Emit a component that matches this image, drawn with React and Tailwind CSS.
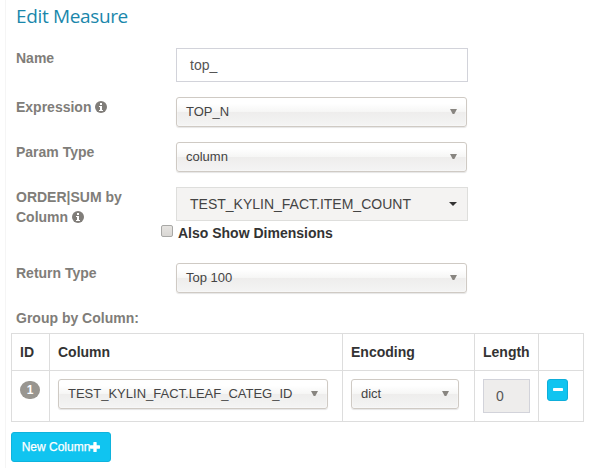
function Select({ children, className = "" }) {
  return (
    <div
      className={`flex h-[30px] items-center justify-between rounded-[3px] border border-[#cfcac4] bg-[linear-gradient(to_bottom,#fff_0%,#fff_20%,#f6f6f5_49%,#eeedec_51%,#f4f4f4_100%)] pr-[9px] pl-[9px] text-[13px] text-[#444] shadow-[inset_0_0_2px_#fff,0_1px_1px_rgba(0,0,0,0.1)] ${className}`}
    >
      <span className="whitespace-nowrap">{children}</span>
      <svg width="7" height="5" viewBox="0 0 7 5" className="-mt-px shrink-0 text-[#888580]">
        <path d="M0 0h7L4.3 5H2.7z" fill="currentColor" />
      </svg>
    </div>
  );
}

function Row({ label, children, className }) {
  return (
    <div className={`flex ${className}`}>
      <div className="w-[160px] shrink-0 font-bold text-[#807d79]">{label}</div>
      {children}
    </div>
  );
}

function Info() {
  return (
    <svg width="12" height="12" viewBox="0 0 12 12" className="inline-block align-[-1px]">
      <circle cx="6" cy="6" r="6" fill="currentColor" />
      <path d="M5 2h2v2H5zM4 5h3v4h1v1H4V9h1V6H4z" fill="#fff" />
    </svg>
  );
}

export default function App() {
  return (
    <div className="h-[468px] w-[594px] overflow-hidden bg-white pl-[5px] font-['Liberation_Sans',Arial,sans-serif] text-[14px] leading-5 text-[#333]">
      <div className="h-full border-l border-[#f5f5f5] pl-[5px]">
        <div className="pl-[5px]">
          <h1 className="h-[48px] pt-[4px] font-['Open_Sans',sans-serif] text-[19px] leading-[25px] tracking-[-0.35px] text-[#1a87ab]">
            Edit Measure
          </h1>
          <Row className="h-[49px]" label="Name">
            <div className="flex h-[34px] w-[292px] items-center border border-[#d2d3da] pl-[13px] text-[#555]">top_</div>
          </Row>
          <Row className="h-[45px]" label={<>Expression <Info /></>}>
            <Select className="w-[291px]">TOP_N</Select>
          </Row>
          <Row className="h-[45px]" label="Param Type">
            <Select className="w-[291px]">column</Select>
          </Row>
          <Row className="h-[36px]" label={<>ORDER|SUM by<br />Column <Info /></>}>
            <div className="flex h-[34px] w-[292px] items-center justify-between border border-[#dededc] bg-[#f4f3f2] pr-[10px] pl-[13px] text-[#444]">
              <span>TEST_KYLIN_FACT.ITEM_COUNT</span>
              <svg width="8" height="4" viewBox="0 0 8 4">
                <path d="M0 0h8L4 4z" fill="#333" />
              </svg>
            </div>
          </Row>
          <div className="flex h-[40px] pl-[145px]">
            <span className="mt-[2px] size-[12px] rounded-[2px] border border-[#a8a8a6] bg-linear-to-b from-[#e6e4e1] to-[#d9d7d4]" />
            <b className="pl-[5px]">Also Show Dimensions</b>
          </div>
          <Row className="h-[45px]" label="Return Type">
            <Select className="w-[291px]">Top 100</Select>
          </Row>
          <div className="h-[25px] font-bold text-[#807d79]">Group by Column:</div>
        </div>

        <table className="w-[573px] table-fixed border-collapse text-left [&_td]:border [&_td]:border-[#ddd] [&_td]:p-[8px] [&_td]:align-top [&_th]:border [&_th]:border-[#ddd] [&_th]:p-[8px]">
          <colgroup>
            <col className="w-[38px]" />
            <col className="w-[293px]" />
            <col className="w-[132px]" />
            <col className="w-[64px]" />
            <col className="w-[45px]" />
          </colgroup>
          <thead>
            <tr className="h-[37px]">
              <th>ID</th>
              <th>Column</th>
              <th>Encoding</th>
              <th>Length</th>
              <th />
            </tr>
          </thead>
          <tbody>
            <tr className="h-[51px]">
              <td>
                <span className="mt-[2px] flex h-[18px] w-[20px] items-center justify-center rounded-[9px] bg-[#999690] text-[12px] leading-none font-bold text-white">1</span>
              </td>
              <td><Select className="w-[270px]">TEST_KYLIN_FACT.LEAF_CATEG_ID</Select></td>
              <td><Select className="w-[108px]">dict</Select></td>
              <td>
                <div className="flex h-[34px] w-[47px] items-center border border-[#d2d3da] bg-[#eeedec] pl-[12px] text-[#555]">0</div>
              </td>
              <td>
                <div className="flex h-[22px] w-[21px] items-center justify-center rounded-[3px] border border-[#0eaeda] bg-[#10c4f0]">
                  <svg width="10" height="3" viewBox="0 0 10 3" className="-mt-px">
                    <rect width="10" height="3" rx="0.7" fill="#fff" />
                  </svg>
                </div>
              </td>
            </tr>
          </tbody>
        </table>

        <button className="mt-[10px] flex h-[30px] w-[100px] items-center justify-center rounded-[3px] border border-[#0eb3dd] bg-[#10c4f0] text-[12px] text-white [-webkit-text-stroke:0.25px_white]">
          New Column
          <svg width="10" height="10" viewBox="0 0 9 9" className="-mt-px">
            <path d="M3 0.5Q3 0 3.5 0H5.5Q6 0 6 .5V3H8.5Q9 3 9 3.5V5.5Q9 6 8.5 6H6V8.5Q6 9 5.5 9H3.5Q3 9 3 8.5V6H.5Q0 6 0 5.5V3.5Q0 3 .5 3H3z" fill="#fff" />
          </svg>
        </button>
      </div>
    </div>
  );
}
